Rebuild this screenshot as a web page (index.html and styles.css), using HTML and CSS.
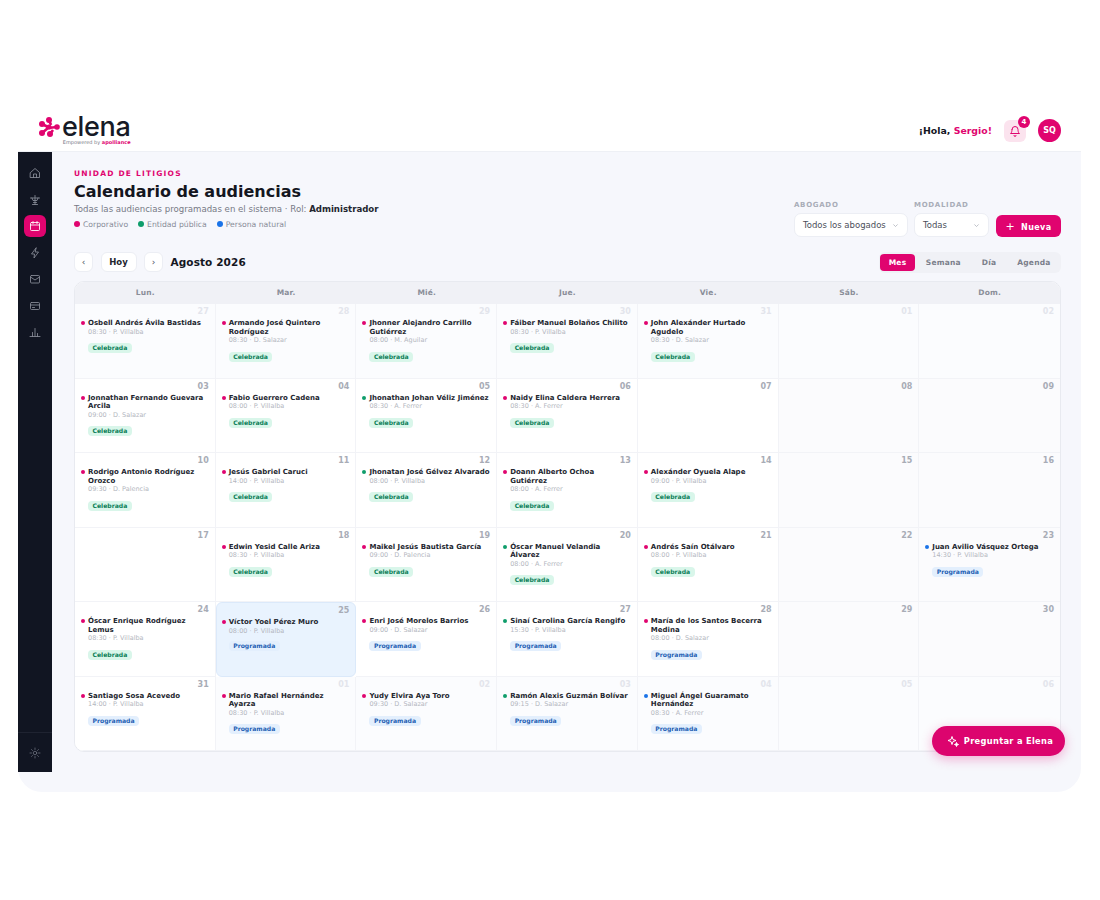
FILE: index.html
```html
<!DOCTYPE html>
<html lang="es">
<head>
    <meta charset="UTF-8">
    <title>Calendario de audiencias</title>
    <link rel="stylesheet" href="styles.css">
</head>
<body>
<div class="app">
    <header class="topbar">
        <div class="logo">
            <svg class="logo-mark" width="23" height="22" viewBox="0 0 23 22">
                <path d="M10 3 L12 8 M3 7 L9 10 M9 11 L18 10 M3 16 L9 11 M11 17 L14 13" fill="none" stroke="#e0046f" stroke-width="2.6"/>
                <g fill="#e0046f">
                    <circle cx="10" cy="3" r="3"/>
                    <circle cx="3" cy="7" r="3"/>
                    <circle cx="10" cy="10" r="2.6"/>
                    <circle cx="3" cy="16" r="3"/>
                    <circle cx="11" cy="17" r="3"/>
                    <circle cx="18" cy="10" r="2.8"/>
                </g>
            </svg>
            <div class="logo-text">
                <span class="logo-name">elena</span>
                <span class="logo-by">Empowered by <b>apolliance</b></span>
            </div>
        </div>
        <div class="user">
            <span class="hello">¡Hola, <em>Sergio!</em></span>
            <span class="bell">
                <svg width="12" height="12" viewBox="0 0 24 24" fill="none" stroke="#e0046f" stroke-width="2" stroke-linecap="round" stroke-linejoin="round"><path d="M6 9a6 6 0 0 1 12 0c0 7 3 8 3 8H3s3-1 3-8"/><path d="M10 21a2 2 0 0 0 4 0"/></svg>
                <span class="bell-count">4</span>
            </span>
            <span class="avatar">SQ</span>
        </div>
    </header>

    <div class="body-wrap">
        <nav class="sidebar">
            <div class="nav-items">
                <a class="nav-item"><svg viewBox="0 0 24 24"><path d="M3 11l9-8 9 8v10H3z"/><path d="M9 21v-7h6v7"/></svg></a>
                <a class="nav-item"><svg viewBox="0 0 24 24"><path d="M12 3v18M7 21h10M3 8h18M6 8l2 5h8l2-5M9 17h6"/></svg></a>
                <a class="nav-item active"><svg viewBox="0 0 24 24"><rect x="3" y="5" width="18" height="16" rx="2"/><path d="M3 10h18M8 3v4M16 3v4"/></svg></a>
                <a class="nav-item"><svg viewBox="0 0 24 24"><path d="M14 2L5 14h6l-1 8 9-12h-6z"/></svg></a>
                <a class="nav-item"><svg viewBox="0 0 24 24"><rect x="3" y="5" width="18" height="15" rx="2"/><path d="M3 8l9 6 9-6"/></svg></a>
                <a class="nav-item"><svg viewBox="0 0 24 24"><rect x="3" y="5" width="18" height="14" rx="2"/><path d="M3 10h18M7 15h4"/></svg></a>
                <a class="nav-item"><svg viewBox="0 0 24 24"><path d="M2 21h20M7 21v-8M12 21V5M17 21v-6"/></svg></a>
            </div>
            <a class="nav-item nav-settings"><svg viewBox="0 0 24 24"><circle cx="12" cy="12" r="3.5"/><path d="M12 2v3M12 19v3M2 12h3M19 12h3M5 5l2 2M17 17l2 2M5 19l2-2M17 7l2-2"/></svg></a>
        </nav>

        <main class="content">
            <div class="page-head">
                <div>
                    <div class="eyebrow">UNIDAD DE LITIGIOS</div>
                    <h1>Calendario de audiencias</h1>
                    <p class="subtitle">Todas las audiencias programadas en el sistema · Rol: <b>Administrador</b></p>
                    <div class="legend">
                        <span><i class="dot pink"></i>Corporativo</span>
                        <span><i class="dot green"></i>Entidad pública</span>
                        <span><i class="dot blue"></i>Persona natural</span>
                    </div>
                </div>
                <div class="filters">
                    <div class="filter">
                        <label>ABOGADO</label>
                        <div class="select select-wide">Todos los abogados<svg class="caret" viewBox="0 0 10 10"><path d="M2 3.5l3 3 3-3"/></svg></div>
                    </div>
                    <div class="filter">
                        <label>MODALIDAD</label>
                        <div class="select select-small">Todas<svg class="caret" viewBox="0 0 10 10"><path d="M2 3.5l3 3 3-3"/></svg></div>
                    </div>
                    <button class="btn-new"><span>+</span>Nueva</button>
                </div>
            </div>

            <div class="toolbar">
                <div class="toolbar-left">
                    <button class="nav-btn">‹</button>
                    <button class="today-btn">Hoy</button>
                    <button class="nav-btn">›</button>
                    <h2>Agosto 2026</h2>
                </div>
                <div class="views">
                    <span class="view active">Mes</span>
                    <span class="view">Semana</span>
                    <span class="view">Día</span>
                    <span class="view">Agenda</span>
                </div>
            </div>

            <section class="calendar">
                <div class="weekdays">
                    <div>Lun.</div><div>Mar.</div><div>Mié.</div><div>Jue.</div><div>Vie.</div><div>Sáb.</div><div>Dom.</div>
                </div>
                <div class="grid">
                    <div class="cell other"><div class="day">27</div><div class="event"><div class="name pink-dot">Osbell Andrés Ávila Bastidas</div><div class="meta">08:30 · P. Villalba</div><span class="badge done">Celebrada</span></div></div>
                    <div class="cell other"><div class="day">28</div><div class="event"><div class="name pink-dot">Armando José Quintero Rodríguez</div><div class="meta">08:30 · D. Salazar</div><span class="badge done">Celebrada</span></div></div>
                    <div class="cell other"><div class="day">29</div><div class="event"><div class="name pink-dot">Jhonner Alejandro Carrillo Gutiérrez</div><div class="meta">08:00 · M. Aguilar</div><span class="badge done">Celebrada</span></div></div>
                    <div class="cell other"><div class="day">30</div><div class="event"><div class="name pink-dot">Fáiber Manuel Bolaños Chilito</div><div class="meta">08:30 · P. Villalba</div><span class="badge done">Celebrada</span></div></div>
                    <div class="cell other"><div class="day">31</div><div class="event"><div class="name pink-dot">John Alexánder Hurtado Agudelo</div><div class="meta">08:30 · D. Salazar</div><span class="badge done">Celebrada</span></div></div>
                    <div class="cell other weekend"><div class="day">01</div></div>
                    <div class="cell other weekend"><div class="day">02</div></div>

                    <div class="cell"><div class="day">03</div><div class="event"><div class="name pink-dot">Jonnathan Fernando Guevara Arcila</div><div class="meta">09:00 · D. Salazar</div><span class="badge done">Celebrada</span></div></div>
                    <div class="cell"><div class="day">04</div><div class="event"><div class="name pink-dot">Fabio Guerrero Cadena</div><div class="meta">08:00 · P. Villalba</div><span class="badge done">Celebrada</span></div></div>
                    <div class="cell"><div class="day">05</div><div class="event"><div class="name green-dot">Jhonathan Johan Véliz Jiménez</div><div class="meta">08:30 · A. Ferrer</div><span class="badge done">Celebrada</span></div></div>
                    <div class="cell"><div class="day">06</div><div class="event"><div class="name pink-dot">Naidy Elina Caldera Herrera</div><div class="meta">08:30 · A. Ferrer</div><span class="badge done">Celebrada</span></div></div>
                    <div class="cell"><div class="day">07</div></div>
                    <div class="cell weekend"><div class="day">08</div></div>
                    <div class="cell weekend"><div class="day">09</div></div>

                    <div class="cell"><div class="day">10</div><div class="event"><div class="name pink-dot">Rodrigo Antonio Rodríguez Orozco</div><div class="meta">09:30 · D. Palencia</div><span class="badge done">Celebrada</span></div></div>
                    <div class="cell"><div class="day">11</div><div class="event"><div class="name pink-dot">Jesús Gabriel Caruci</div><div class="meta">14:00 · P. Villalba</div><span class="badge done">Celebrada</span></div></div>
                    <div class="cell"><div class="day">12</div><div class="event"><div class="name green-dot">Jhonatan José Gélvez Alvarado</div><div class="meta">08:00 · P. Villalba</div><span class="badge done">Celebrada</span></div></div>
                    <div class="cell"><div class="day">13</div><div class="event"><div class="name pink-dot">Doann Alberto Ochoa Gutiérrez</div><div class="meta">08:00 · A. Ferrer</div><span class="badge done">Celebrada</span></div></div>
                    <div class="cell"><div class="day">14</div><div class="event"><div class="name pink-dot">Alexánder Oyuela Alape</div><div class="meta">09:00 · P. Villalba</div><span class="badge done">Celebrada</span></div></div>
                    <div class="cell weekend"><div class="day">15</div></div>
                    <div class="cell weekend"><div class="day">16</div></div>

                    <div class="cell"><div class="day">17</div></div>
                    <div class="cell"><div class="day">18</div><div class="event"><div class="name pink-dot">Edwin Yesid Calle Ariza</div><div class="meta">08:30 · P. Villalba</div><span class="badge done">Celebrada</span></div></div>
                    <div class="cell"><div class="day">19</div><div class="event"><div class="name pink-dot">Maikel Jesús Bautista García</div><div class="meta">09:00 · D. Palencia</div><span class="badge done">Celebrada</span></div></div>
                    <div class="cell"><div class="day">20</div><div class="event"><div class="name green-dot">Óscar Manuel Velandia Álvarez</div><div class="meta">08:00 · A. Ferrer</div><span class="badge done">Celebrada</span></div></div>
                    <div class="cell"><div class="day">21</div><div class="event"><div class="name pink-dot">Andrés Saín Otálvaro</div><div class="meta">08:00 · P. Villalba</div><span class="badge done">Celebrada</span></div></div>
                    <div class="cell weekend"><div class="day">22</div></div>
                    <div class="cell weekend"><div class="day">23</div><div class="event"><div class="name blue-dot">Juan Avilio Vásquez Ortega</div><div class="meta">14:30 · P. Villalba</div><span class="badge planned">Programada</span></div></div>

                    <div class="cell"><div class="day">24</div><div class="event"><div class="name pink-dot">Óscar Enrique Rodríguez Lemus</div><div class="meta">08:30 · P. Villalba</div><span class="badge done">Celebrada</span></div></div>
                    <div class="cell today"><div class="day">25</div><div class="event"><div class="name pink-dot">Víctor Yoel Pérez Muro</div><div class="meta">08:00 · P. Villalba</div><span class="badge planned">Programada</span></div></div>
                    <div class="cell"><div class="day">26</div><div class="event"><div class="name pink-dot">Enri José Morelos Barrios</div><div class="meta">09:00 · D. Salazar</div><span class="badge planned">Programada</span></div></div>
                    <div class="cell"><div class="day">27</div><div class="event"><div class="name green-dot">Sinaí Carolina García Rengifo</div><div class="meta">15:30 · P. Villalba</div><span class="badge planned">Programada</span></div></div>
                    <div class="cell"><div class="day">28</div><div class="event"><div class="name pink-dot">María de los Santos Becerra Medina</div><div class="meta">08:00 · D. Salazar</div><span class="badge planned">Programada</span></div></div>
                    <div class="cell weekend"><div class="day">29</div></div>
                    <div class="cell weekend"><div class="day">30</div></div>

                    <div class="cell"><div class="day">31</div><div class="event"><div class="name pink-dot">Santiago Sosa Acevedo</div><div class="meta">14:00 · P. Villalba</div><span class="badge planned">Programada</span></div></div>
                    <div class="cell other"><div class="day">01</div><div class="event"><div class="name pink-dot">Mario Rafael Hernández Ayarza</div><div class="meta">08:30 · P. Villalba</div><span class="badge planned">Programada</span></div></div>
                    <div class="cell other"><div class="day">02</div><div class="event"><div class="name pink-dot">Yudy Elvira Aya Toro</div><div class="meta">09:30 · D. Salazar</div><span class="badge planned">Programada</span></div></div>
                    <div class="cell other"><div class="day">03</div><div class="event"><div class="name green-dot">Ramón Alexis Guzmán Bolívar</div><div class="meta">09:15 · D. Salazar</div><span class="badge planned">Programada</span></div></div>
                    <div class="cell other"><div class="day">04</div><div class="event"><div class="name blue-dot">Miguel Ángel Guaramato Hernández</div><div class="meta">08:30 · A. Ferrer</div><span class="badge planned">Programada</span></div></div>
                    <div class="cell other weekend"><div class="day">05</div></div>
                    <div class="cell other weekend"><div class="day">06</div></div>
                </div>
            </section>

            <button class="ask-elena">
                <svg width="12" height="12" viewBox="0 0 24 24" fill="none" stroke="#fff" stroke-width="2" stroke-linejoin="round"><path d="M10 3l2 6 6 2-6 2-2 6-2-6-6-2 6-2z"/><path d="M19 15l1 3 3 1-3 1-1 3-1-3-3-1 3-1z" fill="#fff"/></svg>
                Preguntar a Elena
            </button>
        </main>
    </div>
</div>
</body>
</html>
```

FILE: styles.css
```css
* {
    box-sizing: border-box;
}
body {
    margin: 0;
    padding: 105px 19px 0 18px;
    background: #fff;
    font-family: "DejaVu Sans", sans-serif;
    color: #14161f;
}
button {
    font-family: inherit;
    border: none;
    cursor: pointer;
}
.app {
    width: 1063px;
}

/* top bar */
.topbar {
    height: 47px;
    display: flex;
    align-items: flex-start;
    justify-content: space-between;
    padding: 0 20px 0 21px;
    border-bottom: 1px solid #eef0f5;
}
.logo {
    display: flex;
    align-items: flex-start;
    padding-top: 11px;
}
.logo-mark {
    margin-top: 1px;
}
.logo-text {
    display: flex;
    flex-direction: column;
    align-items: flex-end;
}
.logo-name {
    font-family: Inter, sans-serif;
    font-weight: 500;
    font-size: 27px;
    line-height: 22px;
    letter-spacing: -0.3px;
    color: #161a26;
}
.logo-by {
    font-size: 5px;
    line-height: 7px;
    margin-top: 1px;
    white-space: nowrap;
    color: #777b88;
}
.logo-by b {
    color: #e0046f;
}
.user {
    display: flex;
    align-items: center;
    padding-top: 14px;
}
.hello {
    font-size: 9.4px;
    font-weight: bold;
    margin-right: 12px;
}
.hello em {
    font-style: normal;
    color: #e0046f;
}
.bell {
    position: relative;
    width: 22px;
    height: 22px;
    margin-right: 12px;
    border-radius: 6px;
    background: #fbe3ee;
    display: flex;
    align-items: center;
    justify-content: center;
}
.bell-count {
    position: absolute;
    top: -4px;
    right: -4px;
    width: 12px;
    height: 12px;
    border-radius: 50%;
    background: #e0046f;
    color: #fff;
    font-size: 7px;
    font-weight: bold;
    line-height: 12px;
    text-align: center;
}
.avatar {
    width: 23px;
    height: 23px;
    border-radius: 50%;
    background: #e0046f;
    color: #fff;
    font-size: 8px;
    font-weight: bold;
    line-height: 23px;
    text-align: center;
}

/* sidebar + content */
.body-wrap {
    display: flex;
    align-items: flex-start;
    height: 640px;
    background: #f6f7fc;
    border-radius: 0 0 24px 24px;
    position: relative;
}
.sidebar {
    width: 34px;
    height: 620px;
    background: #111522;
    display: flex;
    flex-direction: column;
    justify-content: space-between;
    align-items: center;
    padding: 10px 0 0;
    flex-shrink: 0;
}
.nav-items {
    display: flex;
    flex-direction: column;
    gap: 4.5px;
}
.nav-item {
    width: 22px;
    height: 22px;
    border-radius: 6px;
    display: flex;
    align-items: center;
    justify-content: center;
}
.nav-item svg {
    width: 12px;
    height: 12px;
    fill: none;
    stroke: #8a8e9a;
    stroke-width: 1.7;
    stroke-linejoin: round;
    stroke-linecap: round;
}
.nav-item.active {
    background: #e0046f;
}
.nav-item.active svg {
    stroke: #fff;
}
.nav-settings {
    border-top: 1px solid #1f2331;
    width: 34px;
    height: 40px;
    border-radius: 0;
}
.nav-settings svg {
    stroke: #777b88;
    stroke-width: 1.4;
}
.content {
    flex: 1;
    padding: 17px 20px 0 22px;
}

/* heading */
.page-head {
    display: flex;
    justify-content: space-between;
    align-items: flex-start;
    height: 68px;
}
.eyebrow {
    font-size: 7.5px;
    font-weight: bold;
    letter-spacing: 1.2px;
    line-height: 10px;
    color: #e0046f;
}
h1 {
    margin: 1px 0 0;
    font-size: 16px;
    line-height: 24px;
}
.subtitle {
    margin: -1px 0 0;
    font-size: 8.6px;
    line-height: 12px;
    color: #767a86;
}
.subtitle b {
    color: #23262f;
}
.legend {
    display: flex;
    gap: 10px;
    margin-top: 4px;
    font-size: 7.7px;
    line-height: 12px;
    color: #888c98;
}
.dot {
    display: inline-block;
    width: 6px;
    height: 6px;
    border-radius: 50%;
    margin-right: 3px;
}
.dot.pink {
    background: #e0046f;
}
.dot.green {
    background: #0f9d6b;
}
.dot.blue {
    background: #1a73e8;
}
.filters {
    align-self: flex-end;
    display: flex;
    align-items: flex-end;
    gap: 6px;
}
.filter label {
    display: block;
    font-size: 7px;
    font-weight: bold;
    letter-spacing: 0.7px;
    line-height: 10px;
    color: #a9adb8;
    margin-bottom: 3px;
}
.select {
    height: 24px;
    background: #fff;
    border: 1px solid #eceef4;
    border-radius: 7px;
    padding: 0 8px;
    display: flex;
    align-items: center;
    justify-content: space-between;
    font-size: 8.5px;
    color: #4b4f5b;
}
.select-wide {
    width: 114px;
}
.select-small {
    width: 75px;
}
.caret {
    width: 7px;
    height: 7px;
    fill: none;
    stroke: #a4a8b2;
    stroke-width: 1;
}
.btn-new {
    width: 65px;
    height: 22px;
    margin-left: 1px;
    background: #e0046f;
    color: #fff;
    border-radius: 6px;
    font-size: 8px;
    font-weight: bold;
    letter-spacing: 0.4px;
}
.btn-new span {
    font-weight: normal;
    font-size: 11px;
    margin-right: 6px;
}

/* toolbar */
.toolbar {
    display: flex;
    justify-content: space-between;
    align-items: flex-start;
    height: 21px;
    margin-top: 15px;
}
.toolbar-left {
    display: flex;
    align-items: center;
    gap: 7.5px;
}
.nav-btn, .today-btn {
    height: 20px;
    background: #fff;
    border: 1px solid #eceef4;
    border-radius: 6px;
    color: #4b4f5b;
}
.nav-btn {
    width: 19px;
    padding: 0;
    font-size: 9px;
}
.today-btn {
    width: 36px;
    padding: 0;
    font-size: 8.5px;
    font-weight: bold;
    color: #23262f;
}
h2 {
    margin: 0;
    font-size: 10.5px;
    line-height: 20px;
    letter-spacing: 0.1px;
}
.views {
    display: flex;
    align-items: center;
    height: 21px;
    background: #f0f1f6;
    border-radius: 6px;
}
.view {
    font-size: 7.5px;
    font-weight: bold;
    color: #7b7f8b;
    padding: 0 10.5px;
    line-height: 17px;
    border-radius: 4px;
    letter-spacing: 0.2px;
}
.view.active {
    padding: 0 9px;
    margin-left: 1px;
    background: #e0046f;
    color: #fff;
}

/* calendar */
.calendar {
    margin-top: 8px;
    width: 987px;
    background: #fff;
    border-radius: 10px;
    border: 1px solid #e8eaf0;
    overflow: hidden;
}
.weekdays {
    display: grid;
    grid-template-columns: repeat(7, 1fr);
    height: 22px;
    background: #f0f1f6;
    font-size: 7.5px;
    font-weight: bold;
    line-height: 22px;
    text-align: center;
    color: #8a8e99;
    letter-spacing: 0.2px;
}
.grid {
    display: grid;
    grid-template-columns: repeat(7, 1fr);
    grid-template-rows: repeat(6, 74.5px);
}
.cell {
    padding: 3px 6px 0 6px;
    border-right: 1px solid #f2f3f7;
    border-bottom: 1px solid #f2f3f7;
    background: #fff;
    min-width: 0;
}
.cell:nth-child(7n) {
    border-right: none;
}
.cell.weekend {
    background: #fbfbfd;
}
.cell.other {
    background: #fbfcfe;
}
.cell.today {
    padding-left: 5px;
    background: #e9f3fe;
    border: 1px solid #dbe9fa;
    border-radius: 6px;
}
.day {
    font-size: 8px;
    font-weight: bold;
    line-height: 10px;
    text-align: right;
    color: #a8acb6;
}
.cell.other .day {
    color: #e3e5ec;
}
.event {
    padding-left: 7px;
    margin: 2px -1px 0 0;
}
.name {
    position: relative;
    font-size: 7px;
    font-weight: bold;
    line-height: 8.7px;
    color: #23262f;
}
.name::before {
    content: "";
    position: absolute;
    left: -7px;
    top: 2.3px;
    width: 4px;
    height: 4px;
    border-radius: 50%;
}
.pink-dot::before {
    background: #e0046f;
}
.green-dot::before {
    background: #0f9d6b;
}
.blue-dot::before {
    background: #1a73e8;
}
.meta {
    font-size: 6.5px;
    line-height: 9.4px;
    color: #b4b7c0;
}
.badge {
    display: block;
    width: fit-content;
    margin-top: 6px;
    padding: 0 4.5px;
    height: 10px;
    border-radius: 4px;
    font-size: 6.1px;
    font-weight: bold;
    line-height: 10px;
}
.badge.done {
    background: #d9f6ea;
    color: #0b7f58;
}
.badge.planned {
    background: #e3effd;
    color: #1f5fb4;
}
.today .badge {
    margin-top: 4.5px;
}

/* floating button */
.ask-elena {
    position: absolute;
    right: 16px;
    top: 574px;
    width: 133px;
    height: 30px;
    padding: 0 0 0 3px;
    border-radius: 15px;
    background: #dc046e;
    color: #fff;
    font-size: 8.3px;
    font-weight: bold;
    letter-spacing: 0.3px;
    display: flex;
    align-items: center;
    justify-content: center;
    gap: 5px;
    box-shadow: 0 3px 12px rgba(224, 4, 111, 0.3);
}
```
